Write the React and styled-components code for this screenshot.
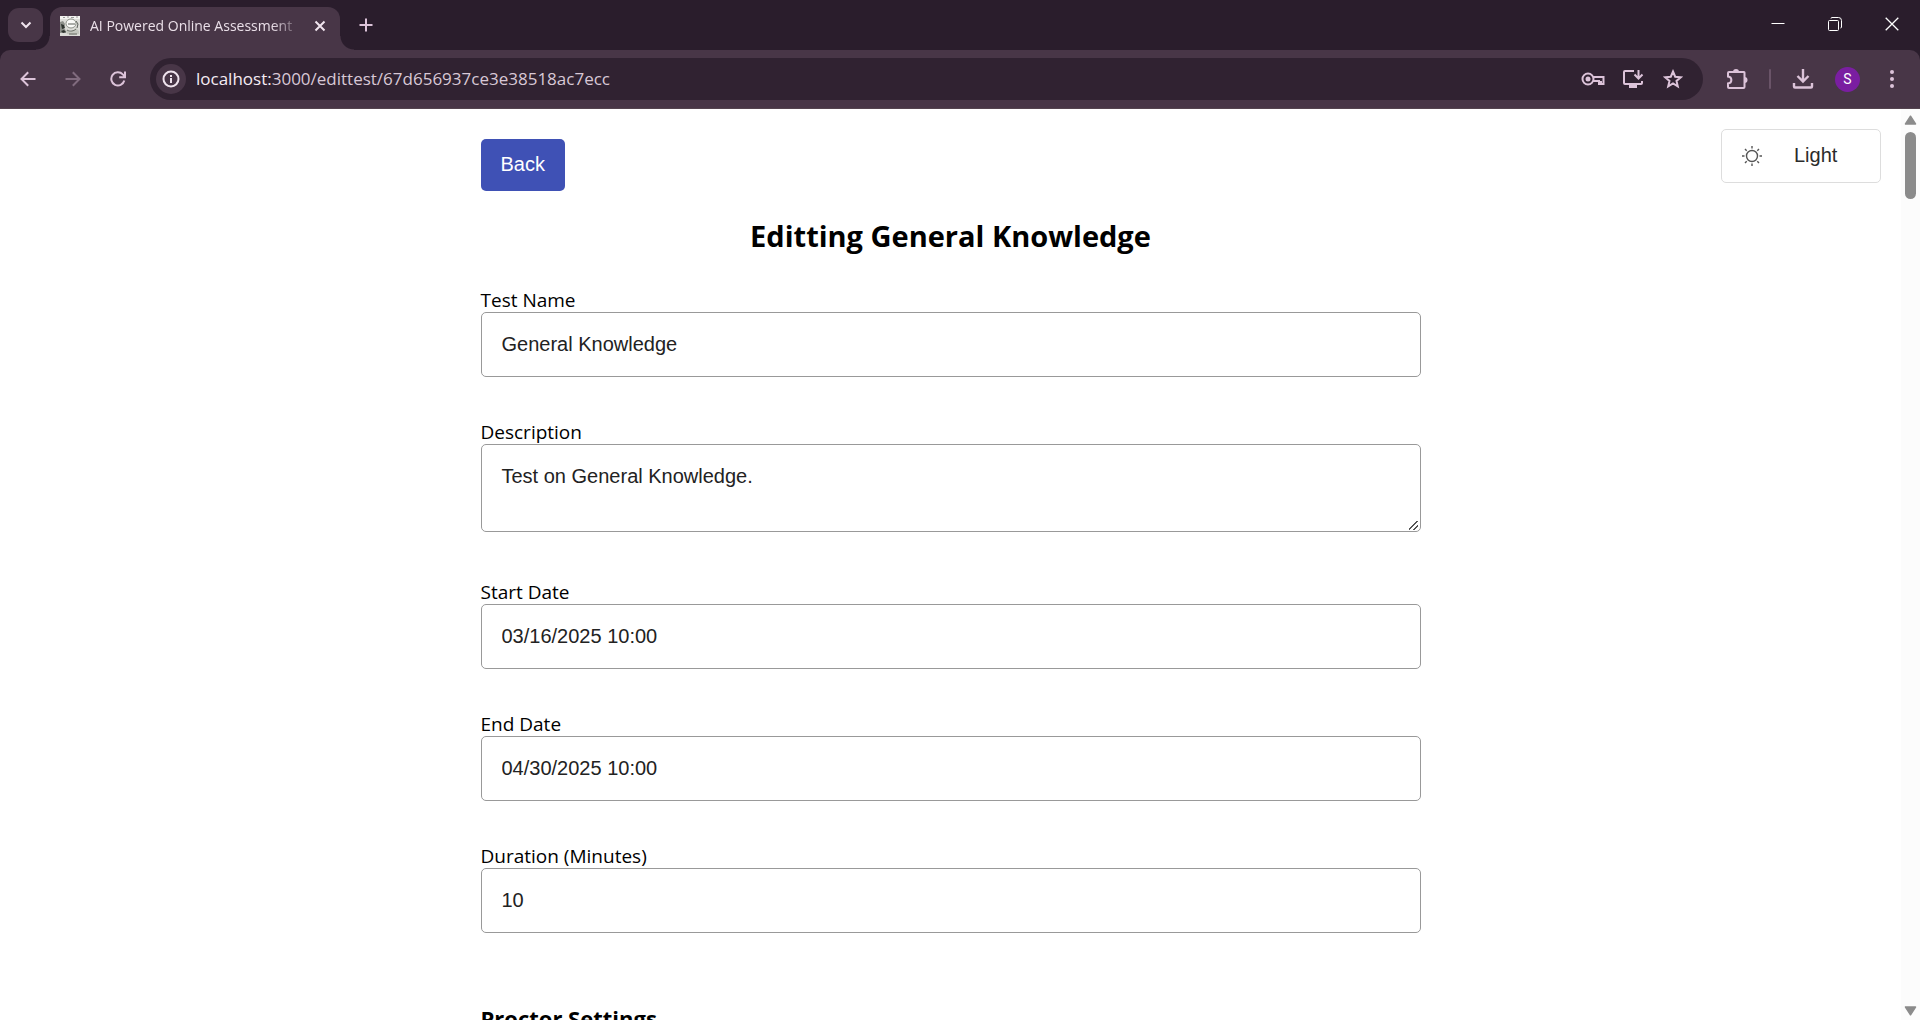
import React, { useState } from "react";
import styled, { createGlobalStyle, css } from "styled-components";

const uiFont = '"Segoe UI", "Open Sans", "Noto Sans", sans-serif';
const bodyFont = 'Arial, "Liberation Sans", Helvetica, sans-serif';

const GlobalStyle = createGlobalStyle`
  *, *::before, *::after { box-sizing: border-box; }
  html, body, #root { height: 100%; }
  body { margin: 0; background: #fff; color: #000; font-family: ${uiFont}; overflow: hidden; }
  button, input, textarea { font: inherit; color: inherit; }
`;

const Window = styled.div`
  display: flex;
  flex-direction: column;
  height: 100vh;
`;

const Chrome = styled.header`
  background: #2a1d2c;
  color: #e6d3e3;
`;

const TabStrip = styled.div`
  display: flex;
  align-items: flex-start;
  height: 50px;
  padding-left: 8px;
`;

const ChromeButton = styled.button`
  display: flex;
  align-items: center;
  justify-content: center;
  flex: none;
  width: ${(p) => p.$w || 40}px;
  height: ${(p) => p.$h || 42}px;
  padding: 0;
  border: 0;
  background: none;
  color: ${(p) => p.$color || "#dcc3d9"};
`;

const TabSearch = styled(ChromeButton)`
  width: 35px;
  height: 34px;
  margin-top: 8px;
  border-radius: 11px;
  background: #483647;
  color: #f0e4ee;
`;

const Tab = styled.div`
  position: relative;
  display: flex;
  align-items: center;
  width: 290px;
  height: 43px;
  margin: 7px 0 0 7px;
  padding: 0 10px 6px;
  border-radius: 12px 12px 0 0;
  background: #483647;

  &::before,
  &::after {
    content: "";
    position: absolute;
    bottom: 0;
    width: 14px;
    height: 14px;
  }
  &::before {
    left: -14px;
    background: radial-gradient(circle at 0 0, transparent 13px, #483647 14px);
  }
  &::after {
    right: -14px;
    background: radial-gradient(circle at 100% 0, transparent 13px, #483647 14px);
  }
`;

const TabTitle = styled.span`
  flex: 1;
  min-width: 0;
  margin-left: 10px;
  overflow: hidden;
  white-space: nowrap;
  font-size: 14px;
  line-height: 24px;
  color: #eadfe8;
  mask-image: linear-gradient(90deg, #000 182px, transparent 212px);
`;

const WindowControls = styled.div`
  display: flex;
  margin-left: auto;
`;

const Toolbar = styled.div`
  display: flex;
  align-items: center;
  height: 59px;
  padding: 0 8px;
  background: #483647;
  border-bottom: 1px solid #54444f;
  border-radius: 10px 10px 0 0;
`;

const NavButtons = styled.div`
  display: flex;
  gap: 5px;
`;

const AddressBar = styled.div`
  display: flex;
  align-items: center;
  flex: 1;
  height: 42px;
  margin: 0 10px 0 12px;
  padding: 0 10px 0 6px;
  border-radius: 21px;
  background: #302231;
`;

const SiteInfo = styled(ChromeButton)`
  width: 30px;
  height: 30px;
  border-radius: 50%;
  background: #483647;
  color: #efe3ed;
`;

const Url = styled.div`
  flex: 1;
  margin-left: 10px;
  font-size: 17px;
  line-height: 24px;
  color: #d8c8d6;

  b { font-weight: 400; color: #f5ecf4; }
`;

const Divider = styled.span`
  width: 2px;
  height: 20px;
  margin: 0 12px 0 8px;
  border-radius: 1px;
  background: #6a5468;
`;

const Avatar = styled.button`
  width: 25px;
  height: 25px;
  margin: 0 12px;
  padding: 0;
  border: 0;
  border-radius: 50%;
  background: #7a1ea1;
  color: #fff;
  font-family: Roboto, sans-serif;
  font-size: 14px;
`;

const Viewport = styled.div`
  display: flex;
  flex: 1;
  min-height: 0;
`;

const Page = styled.main`
  position: relative;
  flex: 1;
  overflow: hidden;
  padding: 30px 20px 0;
`;

const Column = styled.form`
  width: 100%;
  max-width: 940px;
  margin: 0 auto;
`;

const BackButton = styled.button`
  display: block;
  height: 52px;
  padding: 0 20px 2px;
  border: 0;
  border-radius: 5px;
  background: #3f51b5;
  color: #fff;
  font-family: ${bodyFont};
  font-size: 20px;
`;

const Title = styled.h1`
  margin: 25px 0 33px;
  text-align: center;
  font-size: 29px;
  line-height: 39px;
  font-weight: 700;
`;

const SectionTitle = styled.h2`
  margin: 69px 0 0;
  font-size: 22px;
  line-height: 32px;
  font-weight: 700;
`;

const Field = styled.div`
  display: flex;
  flex-direction: column;
  margin-bottom: ${(p) => (p.$multiline ? 48 : 43)}px;
`;

const Label = styled.label`
  font-size: 19px;
  line-height: 24px;
`;

const control = css`
  width: 100%;
  border: 1px solid #999;
  border-radius: 5px;
  outline: 0;
  background: #fff;
  color: #222;
  font-family: ${bodyFont};
  font-size: 20px;
  line-height: 23px;
`;

const TextInput = styled.input`
  ${control}
  height: 65px;
  padding: 19px 20px;
`;

const TextArea = styled.textarea`
  ${control}
  height: 88px;
  padding: 20px;
  resize: vertical;

  &::-webkit-resizer {
    background: linear-gradient(135deg, transparent 41%, #555 43% 51%, transparent 53% 70%, #555 72% 80%, transparent 82%)
      4px 5px / 9px 9px no-repeat;
  }
`;

const ThemeButton = styled.button`
  position: absolute;
  top: 20px;
  right: 20px;
  display: flex;
  align-items: center;
  gap: 32px;
  width: 160px;
  height: 54px;
  padding: 0 20px;
  border: 1px solid #ddd;
  border-radius: 5px;
  background: #fff;
  color: #2b2b2b;
  font-family: ${bodyFont};
  font-size: 20px;

  svg { color: #555; }
  span { padding-bottom: 2px; }
`;

const ScrollTrack = styled.div`
  display: flex;
  flex-direction: column;
  align-items: center;
  width: 19px;
  padding: 6px 0 4px;
  background: #fcfcfc;
`;

const ScrollThumb = styled.div`
  width: 11px;
  height: 67px;
  margin: 7px 0 auto;
  border-radius: 6px;
  background: #8b8b8b;
`;

const Svg = ({ size = 24, w, h, box = "0 0 24 24", sw = 2, children }) => (
  <svg width={w || size} height={h || size} viewBox={box} fill="none" stroke="currentColor" strokeWidth={sw} aria-hidden="true">
    {children}
  </svg>
);

const Favicon = () => (
  <svg width="20" height="20" viewBox="0 0 20 20" aria-hidden="true">
    <rect width="20" height="20" fill="#dcdcd8" />
    <path d="M0 0h20v3H0z" fill="#f3f3f0" />
    <path d="M3 1.500h2M7 1h2M11 1.500h3M16 1h2" stroke="#999" />
    <path d="M0 6l3-1 2 3-1 4 2 3v2H0z" fill="#8d908a" />
    <path d="M1 8l3 1 1 3-3 1zM1 15l3-1 2 2-3 1z" fill="#2e332e" />
    <ellipse cx="11" cy="7.500" rx="5" ry="4.500" fill="#fafaf8" stroke="#8b9087" />
    <path d="M8 8h7M16 5l2 3-1 4" stroke="#5a5f59" fill="none" />
    <path d="M5 13c3 3 8 3 11-1l3 3v3l-6 1-6-1z" fill="#c3c6be" />
    <path d="M7 14c3 2 7 1 9-1M9 18h8" stroke="#666b63" fill="none" />
  </svg>
);

const Arrow = ({ down }) => (
  <svg width="13" height="10" viewBox="0 0 13 10" aria-hidden="true">
    <path d={down ? "M1.500 1h10L6.500 8.800z" : "M1.500 9h10L6.500 1.200z"} fill="#8b8b8b" stroke="#8b8b8b" strokeWidth="1.500" strokeLinejoin="round" />
  </svg>
);

const fields = [
  { id: "name", label: "Test Name", value: "General Knowledge" },
  { id: "description", label: "Description", value: "Test on General Knowledge.", multiline: true },
  { id: "start", label: "Start Date", value: "03/16/2025 10:00" },
  { id: "end", label: "End Date", value: "04/30/2025 10:00" },
  { id: "duration", label: "Duration (Minutes)", value: "10" },
];

function BrowserChrome() {
  return (
    <Chrome>
      <TabStrip>
        <TabSearch type="button" aria-label="Search tabs">
          <Svg size={12} box="0 0 12 12"><path d="M1.500 3.500L6 8l4.500-4.500" /></Svg>
        </TabSearch>
        <Tab>
          <Favicon />
          <TabTitle>AI Powered Online Assessment</TabTitle>
          <ChromeButton type="button" $w={20} $h={20} $color="#f0e4ee" aria-label="Close tab">
            <Svg size={12} box="0 0 12 12"><path d="M1.500 1.500l9 9M10.500 1.500l-9 9" /></Svg>
          </ChromeButton>
        </Tab>
        <ChromeButton type="button" $w={52} $h={50} aria-label="New tab">
          <Svg size={14} box="0 0 14 14"><path d="M7 .5v13M.5 7h13" /></Svg>
        </ChromeButton>
        <WindowControls>
          <ChromeButton type="button" $w={57} $h={48} $color="#fff" aria-label="Minimize">
            <Svg size={14} box="0 0 14 14" sw={1}><path d="M.5 6.500h13" /></Svg>
          </ChromeButton>
          <ChromeButton type="button" $w={57} $h={48} $color="#fff" aria-label="Restore">
            <Svg size={14} box="0 0 14 14" sw={1}>
              <rect x=".5" y="3.500" width="10" height="10" rx="1" />
              <path d="M3 1.500q0-1 1-1h6.500q3 0 3 3V10q0 1-1 1" />
            </Svg>
          </ChromeButton>
          <ChromeButton type="button" $w={57} $h={48} $color="#fff" aria-label="Close">
            <Svg size={14} box="0 0 14 14" sw={1.3}><path d="M.7.7l12.600 12.600M13.300.7L.7 13.300" /></Svg>
          </ChromeButton>
        </WindowControls>
      </TabStrip>
      <Toolbar>
        <NavButtons>
          <ChromeButton type="button" aria-label="Back">
            <Svg size={16} box="0 0 16 16"><path d="M15.500 8H2M8.200 1.200L1.500 8l6.700 6.800" /></Svg>
          </ChromeButton>
          <ChromeButton type="button" $color="#806b7e" aria-label="Forward">
            <Svg size={16} box="0 0 16 16"><path d="M.5 8H14M7.800 1.200L14.500 8l-6.700 6.800" /></Svg>
          </ChromeButton>
          <ChromeButton type="button" aria-label="Reload">
            <Svg size={16} box="0 0 16 16"><path d="M14.300 9.500A6.600 6.600 0 1 1 12.800 3.400L14.800 5.500M15 .5v5.800H9.200" /></Svg>
          </ChromeButton>
        </NavButtons>
        <AddressBar>
          <SiteInfo type="button" aria-label="Site information">
            <Svg size={18} box="0 0 18 18"><circle cx="9" cy="9" r="7.500" /><path d="M9 8v5M9 5v2" /></Svg>
          </SiteInfo>
          <Url><b>localhost:</b>3000/edittest/67d656937ce3e38518ac7ecc</Url>
          <ChromeButton type="button" aria-label="Passwords">
            <Svg w={24} h={14} box="0 0 24 14">
              <circle cx="7" cy="7" r="5.500" />
              <circle cx="7" cy="7" r="2.500" fill="currentColor" stroke="none" />
              <path d="M12 5h10.500v7H18V9h-6M20 9v3" />
            </Svg>
          </ChromeButton>
          <ChromeButton type="button" aria-label="Install app">
            <Svg w={22} h={20} box="0 0 22 20">
              <path d="M12 2H3q-1 0-1 1v11q0 1 1 1h16q1 0 1-1v-2M16.500 1v8M12.500 5.500l4 4 4-4" />
              <path d="M7 17.500h8" strokeWidth="3" />
            </Svg>
          </ChromeButton>
          <ChromeButton type="button" aria-label="Bookmark this tab">
            <Svg size={20} box="0 0 20 20"><path d="M10 2.500l2.200 5.200 5.600.5-4.300 3.700 1.300 5.500-4.800-2.900-4.800 2.900 1.300-5.500L2.200 8.200l5.600-.5z" /></Svg>
          </ChromeButton>
        </AddressBar>
        <ChromeButton type="button" $w={48} aria-label="Extensions">
          <Svg w={22} h={22} box="0 0 22 22">
            <path d="M3 4h15q.5 0 .5.500V19q0 1-1 1H3q-1 0-1-1v-3.500c4.500-.5 4.500-6.500 0-7V5q0-1 1-1z" />
            <path d="M7 4a3 3 0 0 1 6 0zM18.500 9a3 3 0 0 1 0 6z" fill="currentColor" stroke="none" />
          </Svg>
        </ChromeButton>
        <Divider />
        <ChromeButton type="button" aria-label="Downloads">
          <Svg w={22} h={22} box="0 0 22 22" sw={2.4}>
            <path d="M11 1v12M5.500 8l5.500 5.500L16.500 8M2 15v3.500q0 1 1 1h16q1 0 1-1V15" />
          </Svg>
        </ChromeButton>
        <Avatar type="button" aria-label="Profile">S</Avatar>
        <ChromeButton type="button" aria-label="Menu">
          <Svg w={4} h={18} box="0 0 4 18"><g fill="currentColor" stroke="none"><circle cx="2" cy="2" r="2" /><circle cx="2" cy="9" r="2" /><circle cx="2" cy="16" r="2" /></g></Svg>
        </ChromeButton>
      </Toolbar>
    </Chrome>
  );
}

export default function App() {
  const [values, setValues] = useState(() => Object.fromEntries(fields.map((f) => [f.id, f.value])));

  return (
    <Window>
      <GlobalStyle />
      <BrowserChrome />
      <Viewport>
        <Page>
          <Column>
            <BackButton type="button">Back</BackButton>
            <Title>Editting General Knowledge</Title>
            {fields.map(({ id, label, multiline }) => {
              const Control = multiline ? TextArea : TextInput;
              return (
                <Field key={id} $multiline={multiline}>
                  <Label htmlFor={id}>{label}</Label>
                  <Control id={id} value={values[id]} onChange={(e) => setValues({ ...values, [id]: e.target.value })} />
                </Field>
              );
            })}
            <SectionTitle>Proctor Settings</SectionTitle>
          </Column>
          <ThemeButton type="button">
            <Svg size={20} box="0 0 20 20" sw={1.4}>
              <circle cx="10" cy="10" r="5.500" />
              <path d="M10 0v2.500M10 17.500V20M0 10h2.500M17.500 10H20M3 3l1.700 1.700M15.300 15.300L17 17M3 17l1.700-1.700M15.300 4.700L17 3" />
            </Svg>
            <span>Light</span>
          </ThemeButton>
        </Page>
        <ScrollTrack>
          <Arrow />
          <ScrollThumb />
          <Arrow down />
        </ScrollTrack>
      </Viewport>
    </Window>
  );
}
